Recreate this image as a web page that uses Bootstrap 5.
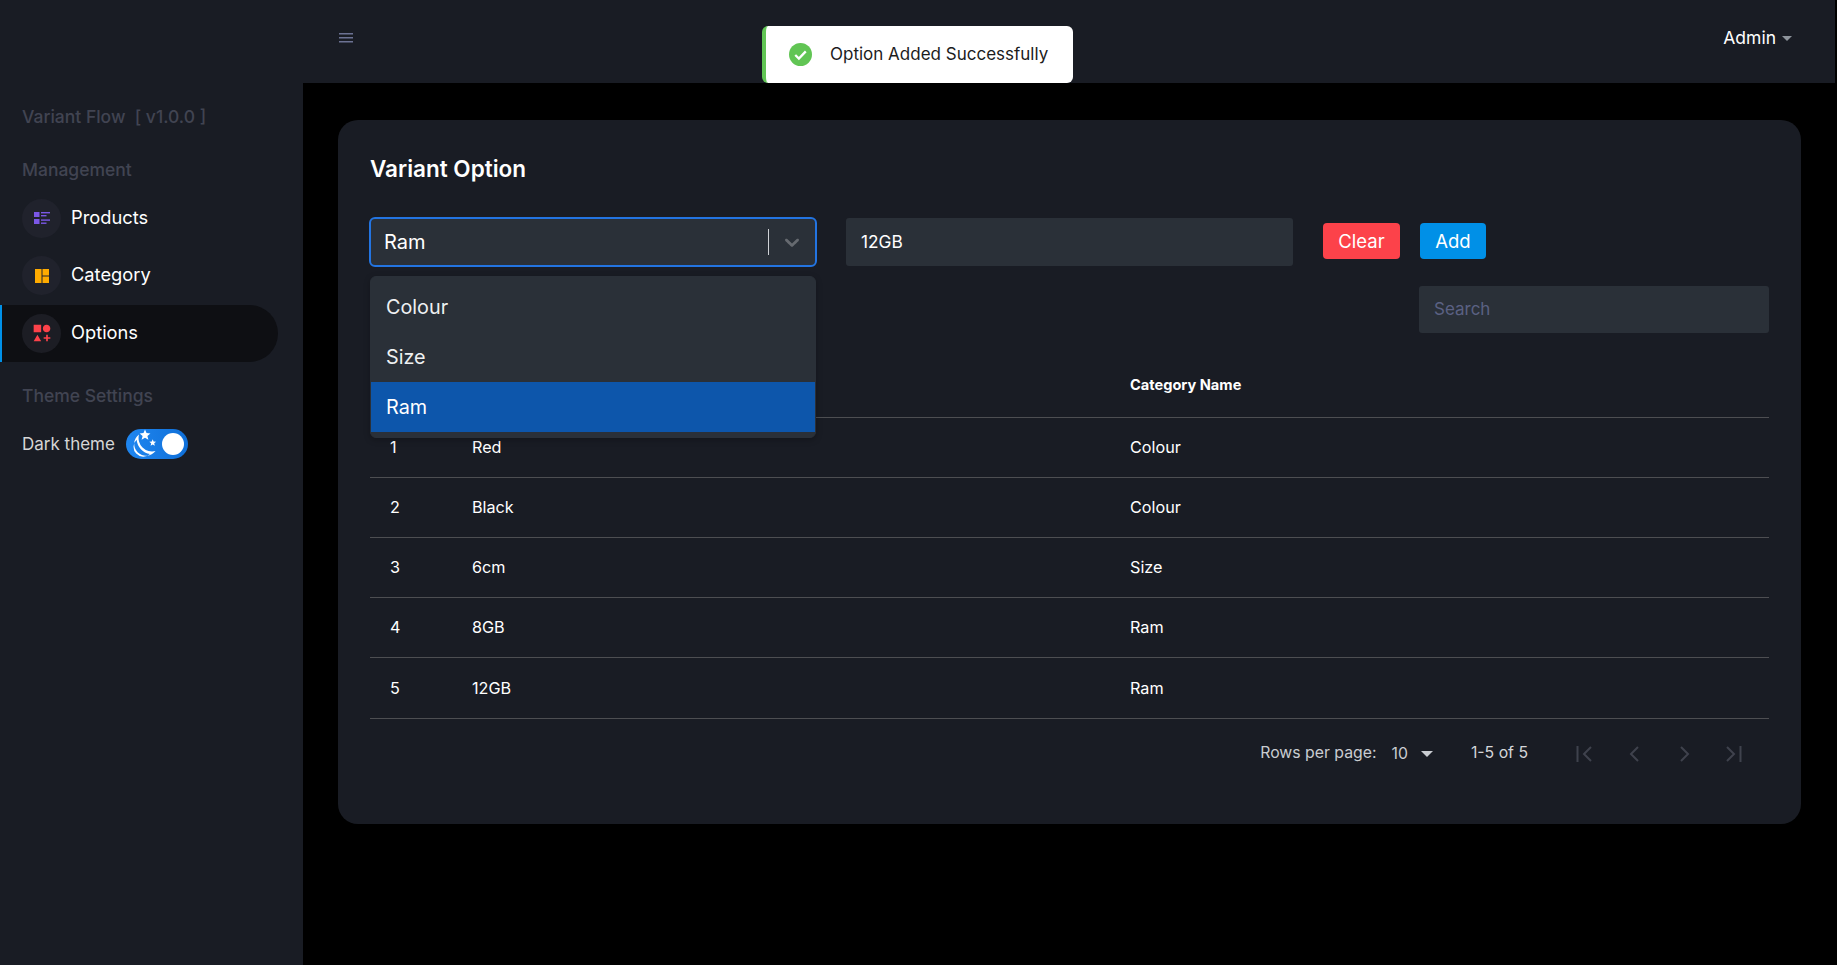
<!doctype html>
<html lang="en" data-bs-theme="dark">
<head>
<meta charset="utf-8">
<title>Variant Option</title>
<link href="https://cdn.jsdelivr.net/npm/bootstrap@5.3.0/dist/css/bootstrap.min.css" rel="stylesheet">
<style>
:root{--panel:#191c24;--field:#2a3038;--muted:#414452;}
html,body{height:100%;}
body{background:#000;color:#fff;font-family:Inter,"Liberation Sans",sans-serif;font-size:15px;overflow:hidden;}
.side{width:303px;height:965px;background:var(--panel);padding-top:105px;flex:none;}
.side-label{color:var(--muted);font-size:17.5px;font-weight:500;line-height:24px;padding-left:22px;white-space:pre;}
.lab-mgmt{margin-top:29px;}
.lab-theme{margin-top:22px;}
.side-nav{margin-top:7.5px;}
.side-item{height:57.5px;padding-left:22px;color:#fff;font-size:18.3px;gap:10px;width:278px;text-decoration:none;}
.side-item.is-on{background:#0e0f13;border-left:2px solid #0090e7;padding-left:20px;border-radius:0 29px 29px 0;}
.item-text{padding-bottom:2px;}
.ico-ball{width:39px;height:39px;border-radius:50%;background:#20222c;}
.is-on .ico-ball{background:#1c1d24;}
.theme-row{margin-top:21px;padding-left:22px;height:30px;gap:11px;font-size:17px;color:#d6d6d6;}
.theme-text{padding-top:2px;}
.switcher{width:62px;height:30px;border-radius:15px;background:linear-gradient(90deg,#1f86f0,#0f6fd8);position:relative;flex:none;}
.knob{position:absolute;right:4px;top:4px;width:22px;height:22px;border-radius:50%;background:#fff;}
.main-col{flex:1;min-width:0;position:relative;}
.topbar{height:83px;background:var(--panel);margin-right:2px;padding:0 43px 0 36px;}
.admin-btn{font-size:17.5px;color:#fff;margin-top:-6px;}
.admin-caret{width:0;height:0;border-left:5px solid transparent;border-right:5px solid transparent;border-top:5px solid #8d939b;margin-left:6px;}
.burger{margin-top:-7px;}
.toast-note{position:absolute;left:459px;top:26px;width:311px;height:57px;background:#fff;color:#1c1c1c;border-left:4px solid #61c554;border-radius:6px;font-size:17px;padding:0 0 0 23px;gap:18px;}
.content-wrap{padding:37px 36px 37px 35px;}
.panel-box{background:var(--panel);border-radius:20px;height:704px;padding:0 32px 0 31px;}
.panel-title{font-size:22.5px;font-weight:600;line-height:30px;padding-top:34px;margin:0 0 0 1px;height:64px;}
.form-line{margin-top:33px;height:50px;}
.pick-wrap{position:relative;width:448px;flex:none;}
.pick-box{height:50px;background:var(--field);border:2px solid #2374e1;border-radius:6px;padding-left:13px;font-size:20px;}
.pick-sep{width:1px;height:26px;background:#cfd2d6;margin-left:auto;}
.pick-arrow{margin:0 11px 0 11px;}
.pick-menu.dropdown-menu{position:absolute;top:59px;left:1px;width:446px;min-width:0;background:var(--field);border:1px solid var(--field);border-radius:6px;padding:5px 0;z-index:5;box-shadow:0 2px 6px rgba(0,0,0,.25);display:block;}
.pick-menu .dropdown-item{height:50px;line-height:51px;padding:0 15px;font-size:19.8px;color:#eef0f2;background:transparent;}
.pick-menu .dropdown-item.active{background:#0d56ab;color:#fff;}
.field-box.form-control{width:447px;height:48px;flex:none;margin-left:29px;background:var(--field);border:0;border-radius:3px;color:#fff;font-size:17.3px;padding:0 15px 1px;}
.act-btn{height:36px;font-size:18.5px;line-height:36px;padding:0;border:0;border-radius:4px;color:#fff;flex:none;margin-top:-2px;}
.act-clear{width:77px;background:#fc424a;margin-left:30px;}
.act-add{width:66px;background:#0090e7;margin-left:20px;}
.act-btn:hover,.act-btn:active{color:#fff;}
.search-line{margin-top:19px;height:47px;}
.search-box.form-control{width:350px;height:47px;background:var(--field);border:0;border-radius:3px;color:#fff;font-size:17px;padding:0 15px 2px;}
.search-box.form-control::placeholder{color:#5b6183;}
.grid-table.table{table-layout:fixed;margin:19px 0 0 1px;width:calc(100% - 1px);--bs-table-bg:transparent;--bs-table-color:#fff;color:#fff;}
.grid-table th,.grid-table td{border-bottom:1px solid #4d4e52;padding:0 0 0 16px;vertical-align:middle;background:transparent;color:#fff;}
.grid-table th{height:65px;font-size:14.6px;font-weight:700;padding-top:4px;}
.grid-table td{height:60px;font-size:16.2px;}
.grid-table tr:last-child td{height:61px;padding-top:2px;}
.grid-table .col-first{padding-left:20px;}
.pager-line{height:70px;font-size:15.8px;color:#c9ccd1;padding-right:27px;}
.pager-text{padding-bottom:2px;}
.pg-size{margin-left:15px;color:#c9ccd1;padding-top:1px;}
.pg-caret{width:0;height:0;border-left:6.5px solid transparent;border-right:6.5px solid transparent;border-top:6.5px solid #c9ccd1;margin-left:13px;}
.pg-range{margin-left:38px;color:#d4d6da;}
.pg-ico{flex:none;display:block;}
.pg-first{margin-left:48px;}
.pg-prev{margin-left:37px;}
.pg-next{margin-left:41px;}
.pg-last{margin-left:36px;}
</style>
</head>
<body>
<div class="d-flex">
  <aside class="side">
    <div class="side-label">Variant Flow  [ v1.0.0 ]</div>
    <div class="side-label lab-mgmt">Management</div>
    <nav class="side-nav">
      <a class="side-item d-flex align-items-center" href="#">
        <span class="ico-ball d-flex align-items-center justify-content-center">
          <svg width="18" height="14" viewBox="0 0 18 14" fill="#7b57e6"><rect x="1" y="1" width="5.5" height="5"/><rect x="1" y="8" width="5.5" height="5"/><rect x="8" y="1" width="9" height="1.4"/><rect x="8" y="4" width="5.5" height="1.4"/><rect x="8" y="8.4" width="9" height="1.4"/><rect x="8" y="11.5" width="5.5" height="1.4"/></svg>
        </span>
        <span class="item-text">Products</span>
      </a>
      <a class="side-item d-flex align-items-center" href="#">
        <span class="ico-ball d-flex align-items-center justify-content-center">
          <svg width="16" height="16" viewBox="0 0 16 16" fill="#ffab00"><rect x="1" y="1" width="6.5" height="14"/><rect x="8.5" y="1" width="6.5" height="6.5"/><rect x="8.5" y="8.5" width="6.5" height="6.5"/></svg>
        </span>
        <span class="item-text">Category</span>
      </a>
      <a class="side-item is-on d-flex align-items-center" href="#">
        <span class="ico-ball d-flex align-items-center justify-content-center">
          <svg width="20" height="20" viewBox="0 0 24 24" fill="#fc424a"><path d="M2,2H11V11H2V2M17.5,2C20,2 22,4 22,6.5C22,9 20,11 17.5,11C15,11 13,9 13,6.5C13,4 15,2 17.5,2M6.5,14L11,22H2L6.5,14M19,17H22V19H19V22H17V19H14V17H17V14H19V17Z"/></svg>
        </span>
        <span class="item-text">Options</span>
      </a>
    </nav>
    <div class="side-label lab-theme">Theme Settings</div>
    <div class="theme-row d-flex align-items-center">
      <span class="theme-text">Dark theme</span>
      <span class="switcher d-flex align-items-center">
        <svg width="34" height="30" viewBox="0 0 34 30" fill="#fff"><path fill-rule="evenodd" d="M13 5.5A11.8 11.8 0 1 0 29.5 22A13.5 13.5 0 0 1 13 5.5ZM10.6 10.8A8.6 8.6 0 0 0 24 25A16 16 0 0 1 10.6 10.8Z"/><path d="M19 .5l1.5 3.6 3.9.3-3 2.5 1 3.8-3.4-2-3.4 2 1-3.8-3-2.5 3.9-.3z"/><path d="M26.7 10.2l.9 2.3 2.5.2-1.9 1.6.6 2.4-2.1-1.3-2.1 1.3.6-2.4-1.9-1.6 2.5-.2z"/></svg>
        <span class="knob"></span>
      </span>
    </div>
  </aside>
  <div class="main-col">
    <header class="topbar d-flex align-items-center justify-content-between">
      <svg class="burger" width="14" height="10" viewBox="0 0 14 10" fill="#6c7293"><rect y="0" width="14" height="1.5"/><rect y="4" width="14" height="1.5"/><rect y="8" width="14" height="1.5"/></svg>
      <div class="admin-btn d-flex align-items-center"><span>Admin</span><span class="admin-caret"></span></div>
    </header>
    <div class="toast-note d-flex align-items-center" role="alert">
      <svg width="23" height="23" viewBox="0 0 24 24"><circle cx="12" cy="12" r="12" fill="#61c554"/><path d="M6.5 12.5l3.8 3.8 7.2-7.6" fill="none" stroke="#fff" stroke-width="2.4"/></svg>
      <span>Option Added Successfully</span>
    </div>
    <main class="content-wrap">
      <section class="panel-box">
        <h1 class="panel-title">Variant Option</h1>
        <div class="form-line d-flex align-items-center">
          <div class="pick-wrap">
            <div class="pick-box d-flex align-items-center">
              <span>Ram</span>
              <span class="pick-sep"></span>
              <svg class="pick-arrow" width="24" height="24" viewBox="0 0 20 20" fill="#666a70"><path d="M4.516 7.548c0.436-0.446 1.043-0.481 1.576 0l3.908 3.747 3.908-3.747c0.533-0.481 1.141-0.446 1.574 0 0.436 0.445 0.408 1.197 0 1.615-0.406 0.418-4.695 4.502-4.695 4.502-0.217 0.223-0.502 0.335-0.787 0.335s-0.57-0.112-0.789-0.335c0 0-4.287-4.084-4.695-4.502s-0.436-1.17 0-1.615z"/></svg>
            </div>
            <div class="pick-menu dropdown-menu show">
              <a class="dropdown-item" href="#">Colour</a>
              <a class="dropdown-item" href="#">Size</a>
              <a class="dropdown-item active" href="#">Ram</a>
            </div>
          </div>
          <input class="field-box form-control" type="text" value="12GB" aria-label="Option">
          <button class="act-btn act-clear btn" type="button">Clear</button>
          <button class="act-btn act-add btn" type="button">Add</button>
        </div>
        <div class="search-line d-flex justify-content-end">
          <input class="search-box form-control" type="text" placeholder="Search" aria-label="Search">
        </div>
        <table class="grid-table table">
          <colgroup><col style="width:86px"><col style="width:658px"><col></colgroup>
          <thead>
            <tr><th class="col-first">#</th><th>Option Name</th><th>Category Name</th></tr>
          </thead>
          <tbody>
            <tr><td class="col-first">1</td><td>Red</td><td>Colour</td></tr>
            <tr><td class="col-first">2</td><td>Black</td><td>Colour</td></tr>
            <tr><td class="col-first">3</td><td>6cm</td><td>Size</td></tr>
            <tr><td class="col-first">4</td><td>8GB</td><td>Ram</td></tr>
            <tr><td class="col-first">5</td><td>12GB</td><td>Ram</td></tr>
          </tbody>
        </table>
        <div class="pager-line d-flex align-items-center justify-content-end">
          <span class="pager-text">Rows per page:</span>
          <span class="pg-size">10</span>
          <span class="pg-caret"></span>
          <span class="pg-range pager-text">1-5 of 5</span>
          <svg class="pg-ico pg-first" width="16" height="16" viewBox="0 0 16 16" fill="none" stroke="#3f424d" stroke-width="2"><path d="M1.5 0v16"/><path d="M15 1l-7 7 7 7"/></svg>
          <svg class="pg-ico pg-prev" width="10" height="16" viewBox="0 0 10 16" fill="none" stroke="#3f424d" stroke-width="2"><path d="M9 1L2 8l7 7"/></svg>
          <svg class="pg-ico pg-next" width="10" height="16" viewBox="0 0 10 16" fill="none" stroke="#3f424d" stroke-width="2"><path d="M1 1l7 7-7 7"/></svg>
          <svg class="pg-ico pg-last" width="16" height="16" viewBox="0 0 16 16" fill="none" stroke="#3f424d" stroke-width="2"><path d="M14.5 0v16"/><path d="M1 1l7 7-7 7"/></svg>
        </div>
      </section>
    </main>
  </div>
</div>
<script src="https://cdn.jsdelivr.net/npm/bootstrap@5.3.0/dist/js/bootstrap.bundle.min.js"></script>
</body>
</html>
